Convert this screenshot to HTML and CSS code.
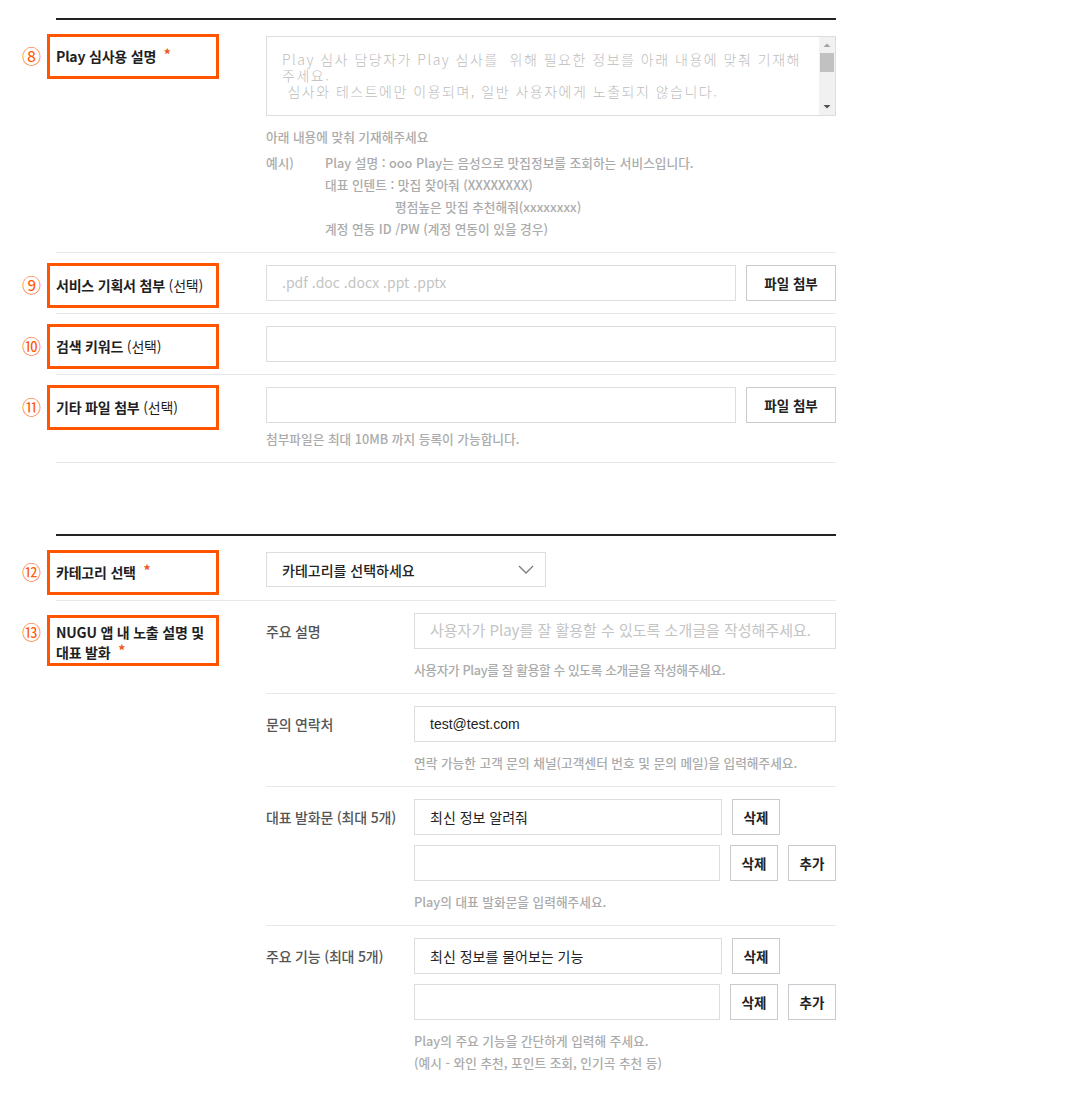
FILE: index.html
```html
<!DOCTYPE html>
<html lang="ko">
<head>
<meta charset="utf-8">
<title>Play 등록</title>
<link rel="stylesheet" href="styles.css">
</head>
<body>
<div class="page">
  <section class="sec">
    <div class="row">
      <div class="lab">
        <div class="anno"><span class="num">⑧</span>Play 심사용 설명 <span class="req">*</span></div>
      </div>
      <div class="field">
        <div class="ta-box">
          <textarea class="ta" placeholder="Play 심사 담당자가 Play 심사를  위해 필요한 정보를 아래 내용에 맞춰 기재해주세요.&#10; 심사와 테스트에만 이용되며, 일반 사용자에게 노출되지 않습니다."></textarea>
          <div class="sb">
            <svg class="sb-arrow" width="16" height="16" viewBox="0 0 16 16"><path d="M4.5 10 L8 6.5 L11.5 10 Z" fill="#a3a3a3"/></svg>
            <div class="sb-thumb"></div>
            <div class="sb-fill"></div>
            <svg class="sb-arrow" width="16" height="16" viewBox="0 0 16 16"><path d="M4.5 6 L8 9.5 L11.5 6 Z" fill="#505050"/></svg>
          </div>
        </div>
        <p class="help help-ta">아래 내용에 맞춰 기재해주세요</p>
        <div class="example">
          <span class="ex-k">예시)</span>
          <div class="ex-v">
            <p>Play 설명 : ooo Play는 음성으로 맛집정보를 조회하는 서비스입니다.</p>
            <p>대표 인텐트 : 맛집 찾아줘 (XXXXXXXX)</p>
            <p class="ex-indent">평점높은 맛집 추천해줘(xxxxxxxx)</p>
            <p>계정 연동 ID /PW (계정 연동이 있을 경우)</p>
          </div>
        </div>
      </div>
    </div>

    <div class="row">
      <div class="lab">
        <div class="anno"><span class="num">⑨</span>서비스 기획서 첨부 <span class="opt">(선택)</span></div>
      </div>
      <div class="field">
        <div class="line">
          <input class="inp grow" type="text" placeholder=".pdf .doc .docx .ppt .pptx">
          <button class="btn btn-file" type="button">파일 첨부</button>
        </div>
      </div>
    </div>

    <div class="row">
      <div class="lab">
        <div class="anno"><span class="num">⑩</span>검색 키워드 <span class="opt">(선택)</span></div>
      </div>
      <div class="field">
        <div class="line">
          <input class="inp grow" type="text">
        </div>
      </div>
    </div>

    <div class="row">
      <div class="lab">
        <div class="anno"><span class="num">⑪</span>기타 파일 첨부 <span class="opt">(선택)</span></div>
      </div>
      <div class="field">
        <div class="line">
          <input class="inp grow" type="text">
          <button class="btn btn-file" type="button">파일 첨부</button>
        </div>
        <p class="help help-file">첨부파일은 최대 10MB 까지 등록이 가능합니다.</p>
      </div>
    </div>
  </section>

  <section class="sec">
    <div class="row">
      <div class="lab">
        <div class="anno"><span class="num">⑫</span>카테고리 선택 <span class="req">*</span></div>
      </div>
      <div class="field">
        <div class="select">
          <span>카테고리를 선택하세요</span>
          <svg width="16" height="9" viewBox="0 0 16 9"><polyline points="1,1 8,8 15,1" fill="none" stroke="#7a7a7a" stroke-width="1.3"/></svg>
        </div>
      </div>
    </div>

    <div class="row row-group">
      <div class="lab">
        <div class="anno anno-2"><span class="num">⑬</span>NUGU 앱 내 노출 설명 및<br>대표 발화 <span class="req">*</span></div>
      </div>
      <div class="field">
        <div class="sub">
          <div class="sub-lab">주요 설명</div>
          <div class="sub-field">
            <div class="line">
              <input class="inp grow inp-lg-ph" type="text" placeholder="사용자가 Play를 잘 활용할 수 있도록 소개글을 작성해주세요.">
            </div>
            <p class="help help-tight">사용자가 Play를 잘 활용할 수 있도록 소개글을 작성해주세요.</p>
          </div>
        </div>

        <div class="sub">
          <div class="sub-lab">문의 연락처</div>
          <div class="sub-field">
            <div class="line">
              <input class="inp grow" type="text" value="test@test.com">
            </div>
            <p class="help">연락 가능한 고객 문의 채널(고객센터 번호 및 문의 메일)을 입력해주세요.</p>
          </div>
        </div>

        <div class="sub">
          <div class="sub-lab">대표 발화문 (최대 5개)</div>
          <div class="sub-field">
            <div class="line">
              <input class="inp w-first" type="text" value="최신 정보 알려줘">
              <button class="btn btn-sm" type="button">삭제</button>
            </div>
            <div class="line">
              <input class="inp grow" type="text">
              <button class="btn btn-sm" type="button">삭제</button>
              <button class="btn btn-sm" type="button">추가</button>
            </div>
            <p class="help">Play의 대표 발화문을 입력해주세요.</p>
          </div>
        </div>

        <div class="sub">
          <div class="sub-lab">주요 기능 (최대 5개)</div>
          <div class="sub-field">
            <div class="line">
              <input class="inp w-first" type="text" value="최신 정보를 물어보는 기능">
              <button class="btn btn-sm" type="button">삭제</button>
            </div>
            <div class="line">
              <input class="inp grow" type="text">
              <button class="btn btn-sm" type="button">삭제</button>
              <button class="btn btn-sm" type="button">추가</button>
            </div>
            <p class="help">Play의 주요 기능을 간단하게 입력해 주세요.<br>(예시 - 와인 추천, 포인트 조회, 인기곡 추천 등)</p>
          </div>
        </div>
      </div>
    </div>
  </section>
</div>
</body>
</html>
```

FILE: styles.css
```css
* {
  box-sizing: border-box;
}

html, body {
  margin: 0;
  padding: 0;
  background: #ffffff;
}

body {
  font-family: "Noto Sans CJK KR", "Noto Sans", sans-serif;
  color: #222222;
  font-size: 14px;
}

p {
  margin: 0;
}

.page {
  margin: 18px 0 0 56px;
  width: 780px;
}

.sec {
  border-top: 2px solid #222222;
}

.sec + .sec {
  margin-top: 71px;
}

.row {
  display: flex;
  padding: 12px 0;
  border-bottom: 1px solid #e7e8ec;
}

.sec > .row:first-child {
  padding-top: 16px;
}

.row-group {
  padding: 0;
  border-bottom: 0;
}

.lab {
  width: 210px;
  flex-shrink: 0;
}

.anno {
  position: relative;
  width: 172px;
  margin: -2px 0 -7px -9px;
  border: 3px solid #ff5500;
  padding: 9px 4px 10px 6px;
  font-size: 14px;
  font-weight: 700;
  line-height: 20px;
  color: #1f1f1f;
  letter-spacing: -0.2px;
  white-space: nowrap;
}

.row-group .anno {
  margin-top: 14px;
  margin-bottom: 0;
}

.anno-2 {
  padding-top: 4px;
  padding-bottom: 1px;
}

.num {
  position: absolute;
  left: -28px;
  top: 9px;
  width: 19px;
  text-align: center;
  font-size: 19px;
  font-weight: 400;
  line-height: 20px;
  color: #ff5a0a;
  letter-spacing: 0;
}

.anno-2 .num {
  top: 4px;
}

.req {
  color: #f2541b;
  font-weight: 700;
  margin-left: 4px;
  position: relative;
  top: -2px;
}

.opt {
  font-weight: 400;
}

.field {
  flex: 1;
  min-width: 0;
}

/* textarea */
.ta-box {
  display: flex;
  height: 80px;
  border: 1px solid #dcdde3;
}

.ta {
  flex: 1;
  min-width: 0;
  border: 0;
  outline: none;
  resize: none;
  padding: 14px 14px 0 15px;
  font-family: "Noto Sans CJK KR", sans-serif;
  font-size: 14px;
  font-weight: 300;
  line-height: 16px;
  letter-spacing: 1.5px;
  color: #222;
  background: #fff;
  overflow: hidden;
}

.ta::placeholder {
  color: #bdbdbd;
}

.sb {
  width: 16px;
  flex-shrink: 0;
  display: flex;
  flex-direction: column;
  background: #f1f1f1;
}

.sb-arrow {
  display: block;
  flex-shrink: 0;
}

.sb-thumb {
  height: 19px;
  margin: 0 1px 0 1px;
  background: #c1c1c1;
}

.sb-fill {
  flex: 1;
}

/* help texts */
.help {
  margin-top: 10px;
  font-size: 12.7px;
  font-weight: 500;
  line-height: 22px;
  color: #ababab;
}

.help-file {
  margin-top: 5px;
}

.help-tight {
  letter-spacing: -0.35px;
}

.example {
  display: flex;
  margin-top: 4px;
  font-size: 12.7px;
  font-weight: 500;
  line-height: 22px;
  color: #ababab;
}

.ex-k {
  width: 59px;
  flex-shrink: 0;
}

.ex-indent {
  padding-left: 70px;
}

/* inputs & buttons */
.line {
  display: flex;
  gap: 10px;
}

.line + .line {
  margin-top: 10px;
}

.inp {
  height: 36px;
  border: 1px solid #dcdde3;
  padding: 0 15px;
  outline: none;
  font-family: "Liberation Sans", "Noto Sans CJK KR", sans-serif;
  font-size: 14px;
  color: #222;
  background: #fff;
  border-radius: 0;
}

.inp::placeholder {
  font-family: "Noto Sans CJK KR", sans-serif;
  color: #c4c4c4;
}

.inp-lg-ph::placeholder {
  font-size: 15px;
}

.grow {
  flex: 1;
  min-width: 0;
}

.w-first {
  width: 308px;
  flex-shrink: 0;
}

.btn {
  height: 36px;
  border: 1px solid #c9cad0;
  background: #fff;
  padding: 0;
  font-family: "Noto Sans CJK KR", sans-serif;
  font-size: 13.5px;
  font-weight: 700;
  color: #222;
  border-radius: 0;
  flex-shrink: 0;
}

.btn-file {
  width: 90px;
}

.btn-sm {
  width: 48px;
}

/* select */
.select {
  display: flex;
  align-items: center;
  justify-content: space-between;
  width: 280px;
  height: 35px;
  border: 1px solid #dcdde3;
  padding: 0 11px 0 15px;
  font-size: 14px;
  font-weight: 500;
  color: #222;
}

.select svg {
  display: block;
}

/* sub rows */
.sub {
  display: flex;
  padding: 12px 0;
  border-bottom: 1px solid #e7e8ec;
}

.sub:last-child {
  border-bottom: 0;
}

.sub-lab {
  width: 148px;
  flex-shrink: 0;
  line-height: 36px;
  font-size: 14px;
  font-weight: 500;
  color: #555;
  letter-spacing: -0.2px;
}

.sub-field {
  flex: 1;
  min-width: 0;
}
```
